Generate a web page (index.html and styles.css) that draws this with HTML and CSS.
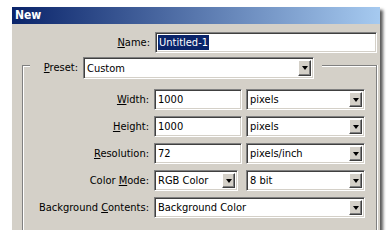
FILE: index.html
```html
<!DOCTYPE html>
<html lang="en">

<head>
    <meta charset="UTF-8">
    <meta name="viewport" content="width=device-width, initial-scale=1.0">
    <title>New</title>
    <link rel="stylesheet" href="styles.css">
</head>

<body>
    <div class="dialog">
        <div class="titlebar">New</div>

        <div class="row name-row">
            <label class="lbl name-lbl"><u>N</u>ame:</label>
            <div class="field name-field"><span class="sel">Untitled-1</span></div>
        </div>

        <div class="group-head">
            <div class="cap-l"></div>
            <label class="lbl preset-lbl"><u>P</u>reset:</label>
            <div class="field combo preset-combo"><span class="val">Custom</span><span class="btn"><i></i></span></div>
            <div class="cap-r"></div>
        </div>

        <div class="group-body">
            <div class="row">
                <label class="lbl"><u>W</u>idth:</label>
                <div class="field num"><span class="val">1000</span></div>
                <div class="field combo unit"><span class="val">pixels</span><span class="btn"><i></i></span></div>
            </div>
            <div class="row">
                <label class="lbl"><u>H</u>eight:</label>
                <div class="field num"><span class="val">1000</span></div>
                <div class="field combo unit"><span class="val">pixels</span><span class="btn"><i></i></span></div>
            </div>
            <div class="row">
                <label class="lbl"><u>R</u>esolution:</label>
                <div class="field num"><span class="val">72</span></div>
                <div class="field combo unit"><span class="val">pixels/inch</span><span class="btn"><i></i></span></div>
            </div>
            <div class="row">
                <label class="lbl">Color <u>M</u>ode:</label>
                <div class="field combo mode"><span class="val">RGB Color</span><span class="btn"><i></i></span></div>
                <div class="field combo unit bits"><span class="val">8 bit</span><span class="btn"><i></i></span></div>
            </div>
            <div class="row">
                <label class="lbl">Background <u>C</u>ontents:</label>
                <div class="field combo wide"><span class="val">Background Color</span><span class="btn"><i></i></span></div>
            </div>
        </div>
    </div>
</body>

</html>
```

FILE: styles.css
```css
body {
    margin: 0;
    background: #fff;
    font-family: "DejaVu Sans Condensed", "DejaVu Sans", sans-serif;
    font-stretch: condensed;
    font-size: 11px;
    color: #000;
}

.dialog {
    margin: 7px 0 0 12px;
    width: 368px;
    height: 223px;
    background: #d4d0c8;
    overflow: hidden;
    box-shadow: 3px 3px 3px rgba(0, 0, 0, 0.65);
}

.titlebar {
    height: 17px;
    line-height: 17px;
    padding-left: 3px;
    background: linear-gradient(to right, #0a246a, #a6caf0);
    color: #fff;
    font-size: 12px;
    font-weight: bold;
}

.row {
    display: flex;
    align-items: center;
    height: 21px;
}

.lbl {
    width: 127px;
    margin-right: 5px;
    text-align: right;
    white-space: nowrap;
}

.name-row {
    margin-top: 8px;
}

.name-lbl {
    width: 138px;
}

/* sunken edit box */
.field {
    box-sizing: border-box;
    height: 21px;
    display: flex;
    align-items: center;
    background: #fff;
    border: 1px solid;
    border-color: #808080 #fff #fff #808080;
    box-shadow: inset 1px 1px 0 #404040, inset -1px -1px 0 #d4d0c8;
    white-space: nowrap;
}

.val {
    flex-grow: 1;
    padding-left: 3px;
}

.name-field {
    width: 222px;
}

.sel {
    margin-left: 2px;
    padding: 1px 1px;
    background: #0a246a;
    color: #fff;
}

.combo {
    padding: 2px;
}

.combo .val {
    padding-left: 1px;
}

.btn {
    box-sizing: border-box;
    width: 13px;
    height: 100%;
    display: flex;
    align-items: center;
    justify-content: center;
    background: #d4d0c8;
    border: 1px solid;
    border-color: #fff #404040 #404040 #fff;
    box-shadow: inset -1px -1px 0 #808080;
}

.btn i {
    width: 0;
    height: 0;
    border-top: 4px solid #000;
    border-left: 3px solid transparent;
    border-right: 3px solid transparent;
}

/* group box */
.group-head {
    display: flex;
    margin: 4px 0 0 10px;
    width: 355px;
    height: 22px;
}

.cap-l {
    width: 7px;
    margin-top: 8px;
    border-top: 1px solid #808080;
    border-left: 1px solid #808080;
    box-shadow: inset 1px 1px 0 #fff;
}

.preset-lbl {
    width: 48px;
    line-height: 22px;
}

.preset-combo {
    width: 231px;
    height: 22px;
}

.cap-r {
    flex-grow: 1;
    margin: 8px 0 0 8px;
    border-top: 1px solid #808080;
    border-right: 1px solid #808080;
    box-shadow: inset 0 1px 0 #fff, 1px 0 0 #fff;
}

.group-body {
    margin-left: 10px;
    width: 355px;
    box-sizing: border-box;
    padding: 10px 0 30px;
    display: flex;
    flex-direction: column;
    gap: 6px;
    border-left: 1px solid #808080;
    border-right: 1px solid #808080;
    box-shadow: inset 1px 0 0 #fff, 1px 0 0 #fff;
}

.group-body .lbl {
    width: 126px;
}

.num {
    width: 88px;
    margin-right: 4px;
}

.unit {
    width: 119px;
}

.mode {
    width: 84px;
    margin-right: 8px;
}

.wide {
    width: 211px;
}
```
